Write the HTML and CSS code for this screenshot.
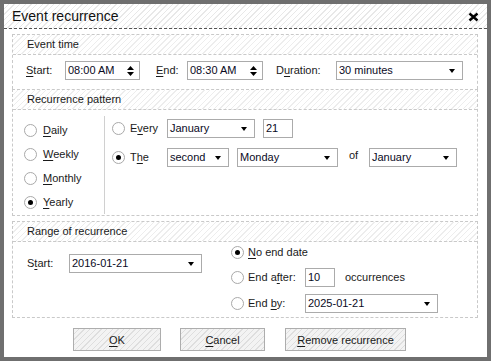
FILE: index.html
```html
<!DOCTYPE html>
<html>
<head>
<meta charset="utf-8">
<link rel="stylesheet" href="styles.css">
</head>
<body>
<div class="window">
  <div class="titlebar">
    <span class="title">Event recurrence</span>
    <svg class="close" width="11" height="10" viewBox="0 0 11 10"><path d="M1.5 1.5 L9.5 8.5 M9.5 1.5 L1.5 8.5" stroke="#000" stroke-width="2.4" fill="none"/></svg>
  </div>
  <div class="content">
    <div class="section sec1">
      <div class="sec-head">Event time</div>
      <div class="sec1-body">
        <span class="lbl w-start"><u>S</u>tart:</span>
        <div class="field spin w75"><span>08:00 AM</span><svg class="spinner" width="7" height="12" viewBox="0 0 7 12"><path d="M3.5 1 L7 5 L0 5 Z M0 7 L7 7 L3.5 11 Z" fill="#000"/></svg></div>
        <span class="lbl w-end"><u>E</u>nd:</span>
        <div class="field spin w76"><span>08:30 AM</span><svg class="spinner" width="7" height="12" viewBox="0 0 7 12"><path d="M3.5 1 L7 5 L0 5 Z M0 7 L7 7 L3.5 11 Z" fill="#000"/></svg></div>
        <span class="lbl w-dur">D<u>u</u>ration:</span>
        <div class="field select w127"><span>30 minutes</span><i class="arrow"></i></div>
      </div>
    </div>
    <div class="section sec2">
      <div class="sec-head">Recurrence pattern</div>
      <div class="sec2-body">
        <div class="pattern-col">
          <div class="prow"><i class="radio"></i><span><u>D</u>aily</span></div>
          <div class="prow"><i class="radio"></i><span><u>W</u>eekly</span></div>
          <div class="prow"><i class="radio"></i><span><u>M</u>onthly</span></div>
          <div class="prow"><i class="radio on"></i><span><u>Y</u>early</span></div>
        </div>
        <div class="detail-col">
          <div class="drow">
            <div class="rlabel"><i class="radio"></i><span>E<u>v</u>ery</span></div>
            <div class="field select w88"><span>January</span><i class="arrow"></i></div>
            <div class="field w30 ml8"><span>21</span></div>
          </div>
          <div class="drow">
            <div class="rlabel"><i class="radio on"></i><span>T<u>h</u>e</span></div>
            <div class="field select w62"><span>second</span><i class="arrow"></i></div>
            <div class="field select w101 ml8"><span>Monday</span><i class="arrow"></i></div>
            <span class="of">of</span>
            <div class="field select w88"><span>January</span><i class="arrow"></i></div>
          </div>
        </div>
      </div>
    </div>
    <div class="section sec3">
      <div class="sec-head">Range of recurrence</div>
      <div class="sec3-body">
        <div class="range-left">
          <span class="lbl w-rstart">S<u>t</u>art:</span>
          <div class="field select w133"><span>2016-01-21</span><i class="arrow"></i></div>
        </div>
        <div class="range-right">
          <div class="rrow"><i class="radio on"></i><span><u>N</u>o end date</span></div>
          <div class="rrow"><i class="radio"></i><span class="w-endlbl">End a<u>f</u>ter:</span><div class="field w30"><span>10</span></div><span class="occ">occurrences</span></div>
          <div class="rrow"><i class="radio"></i><span class="w-endlbl">End <u>b</u>y:</span><div class="field select w133"><span>2025-01-21</span><i class="arrow"></i></div></div>
        </div>
      </div>
    </div>
    <div class="buttons">
      <div class="btn b-ok"><span><u>O</u>K</span></div>
      <div class="btn b-cancel"><span><u>C</u>ancel</span></div>
      <div class="btn b-remove"><span><u>R</u>emove recurrence</span></div>
    </div>
  </div>
</div>
</body>
</html>
```
FILE: styles.css
```css
* { box-sizing: border-box; }
html, body { margin: 0; padding: 0; }
body {
  background: #6f6f6f;
  padding: 4px;
  width: 491px;
  height: 361px;
  font-family: "Liberation Sans", Arial, sans-serif;
  font-size: 11px;
  color: #1a1a1a;
}
u { text-decoration: underline; text-underline-offset: 2px; }
.window {
  width: 483px;
  height: 353px;
  background: #fff;
}
.titlebar {
  height: 25px;
  border-bottom: 1px dashed #555;
  background: repeating-linear-gradient(135deg, #fff 0 3px, #e8e8e8 3px 4px);
  display: flex;
  align-items: center;
  justify-content: space-between;
  padding: 0 8px 0 8px;
}
.title { font-size: 14px; color: #111; }
.close { margin-top: 1px; }
.content { padding: 5px 9px 0 8px; }
.section { border: 1px dashed #c9c9c9; }
.sec1 { border-bottom: none; }
.sec3 { margin-top: 5px; }
.sec-head {
  height: 20px;
  line-height: 19px;
  padding-left: 14px;
  border-bottom: 1px dashed #c9c9c9;
  background: repeating-linear-gradient(135deg, #fff 0 3px, #ededed 3px 4px);
}
.field {
  height: 19px;
  border: 1px solid #ababab;
  background: #fff;
  display: flex;
  align-items: center;
  padding-left: 2px;
  position: relative;
  color: #0a0a1e;
}
.field span { line-height: 17px; }
.select .arrow {
  position: absolute;
  right: 7px;
  top: 7px;
  width: 0; height: 0;
  border-left: 3.5px solid transparent;
  border-right: 3.5px solid transparent;
  border-top: 4px solid #000;
}
.spin .spinner { position: absolute; right: 5px; top: 3px; }
.w75 { width: 75px; } .w76 { width: 76px; } .w127 { width: 127px; }
.w88 { width: 88px; } .w30 { width: 30px; } .w62 { width: 62px; }
.w101 { width: 101px; } .w133 { width: 133px; }
.ml8 { margin-left: 8px; }
.lbl { display: inline-block; }
.sec1-body {
  height: 34px;
  display: flex;
  align-items: flex-start;
  padding: 6px 0 0 13px;
}
.sec1-body .lbl { line-height: 19px; }
.w-start { width: 39px; }
.w-end { width: 31px; margin-left: 16px; }
.w-dur { width: 60px; margin-left: 13px; }
.radio {
  display: inline-block;
  width: 13px; height: 13px;
  border-radius: 50%;
  border: 1px solid #a9a9a9;
  background: #fff;
  position: relative;
  flex: none;
}
.radio.on::after {
  content: "";
  position: absolute;
  left: 3px; top: 3px;
  width: 5px; height: 5px;
  border-radius: 50%;
  background: #000;
}
.sec2-body { display: flex; height: 105px; }
.pattern-col {
  width: 92px;
  padding: 2px 0 0 11px;
  border-right: 1px solid #d0d0d0;
  margin: 6px 0 1px 0;
}
.prow { height: 24px; display: flex; align-items: center; }
.prow .radio { margin-right: 6px; }
.detail-col { padding: 9px 0 0 7px; }
.drow { display: flex; align-items: center; height: 18px; margin-bottom: 11px; }
.drow .field { height: 19px; }
.rlabel { width: 55px; display: flex; align-items: center; }
.rlabel .radio { margin-right: 5px; }
.of { margin-left: 11px; width: 20px; margin-top: -4px; }
.sec3-body { display: flex; height: 75px; }
.range-left {
  width: 218px;
  display: flex;
  align-items: center;
  height: 18px;
  margin-top: 12px;
  padding-left: 14px;
}
.w-rstart { width: 42px; }
.range-right { padding-top: 1px; }
.rrow { display: flex; align-items: center; height: 18px; margin-bottom: 7px; }
.rrow:nth-child(2) { margin-bottom: 8px; }
.rrow .radio { margin-right: 4px; }
.w-endlbl { width: 57px; }
.occ { margin-left: 10px; }
.buttons { display: flex; padding-left: 61px; margin-top: 10px; }
.btn {
  height: 23px;
  border: 1px solid #adadad;
  background: repeating-linear-gradient(135deg, #f3f3f3 0 3px, #dedede 3px 4px);
  display: flex;
  align-items: center;
  justify-content: center;
}
.b-ok { width: 88px; }
.b-cancel { width: 85px; margin-left: 19px; }
.b-remove { width: 121px; margin-left: 20px; }
```
